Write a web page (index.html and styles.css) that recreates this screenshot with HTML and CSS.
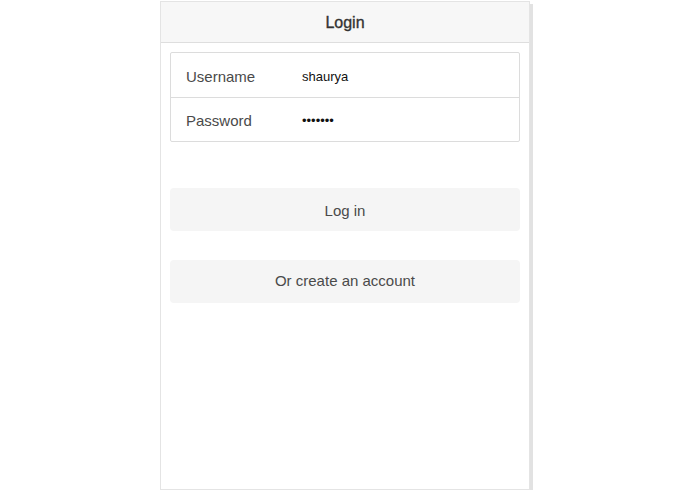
FILE: index.html
```html
<!DOCTYPE html>
<html>
<head>
<meta charset="utf-8">
<link rel="stylesheet" href="styles.css">
</head>
<body>
<div class="panel">
  <div class="header">Login</div>
  <div class="content">
    <div class="form">
      <div class="row">
        <span class="label">Username</span>
        <span class="value">shaurya</span>
      </div>
      <div class="row">
        <span class="label">Password</span>
        <span class="value dots">•••••••</span>
      </div>
    </div>
    <div class="btn login">Log in</div>
    <div class="btn create">Or create an account</div>
  </div>
</div>
</body>
</html>
```
FILE: styles.css
```css
html, body {
  margin: 0;
  padding: 0;
  background: #fff;
}
body {
  font-family: "Liberation Sans", Arial, sans-serif;
  color: #444;
}
.panel {
  margin-left: 160px;
  margin-top: 1px;
  width: 368px;
  height: 487px;
  border: 1px solid #e4e4e4;
  box-shadow: 3px 3px 0 #e2e2e2;
  background: #fff;
}
.header {
  height: 40px;
  line-height: 41px;
  background: #f7f7f7;
  border-bottom: 1px solid #dedede;
  text-align: center;
  font-size: 16px;
  color: #333;
  -webkit-text-stroke: 0.35px #333;
}
.content {
  padding: 9px 9px 0 9px;
}
.form {
  border: 1px solid #dcdcdc;
  border-radius: 2px;
}
.row {
  display: flex;
  align-items: center;
  box-sizing: border-box;
  height: 44px;
  padding-left: 15px;
  padding-top: 2px;
}
.row + .row {
  height: 44px;
  border-top: 1px solid #dcdcdc;
}
.label {
  width: 116px;
  font-size: 15px;
  color: #4a4a4a;
}
.value {
  font-size: 13px;
  color: #111;
}
.dots {
  font-size: 13px;
}
.btn {
  height: 43px;
  background: #f5f5f5;
  border-radius: 4px;
  text-align: center;
  font-size: 15px;
  color: #4a4a4a;
}
.login {
  margin-top: 46px;
  line-height: 45px;
}
.create {
  margin-top: 29px;
  line-height: 41px;
}
```
